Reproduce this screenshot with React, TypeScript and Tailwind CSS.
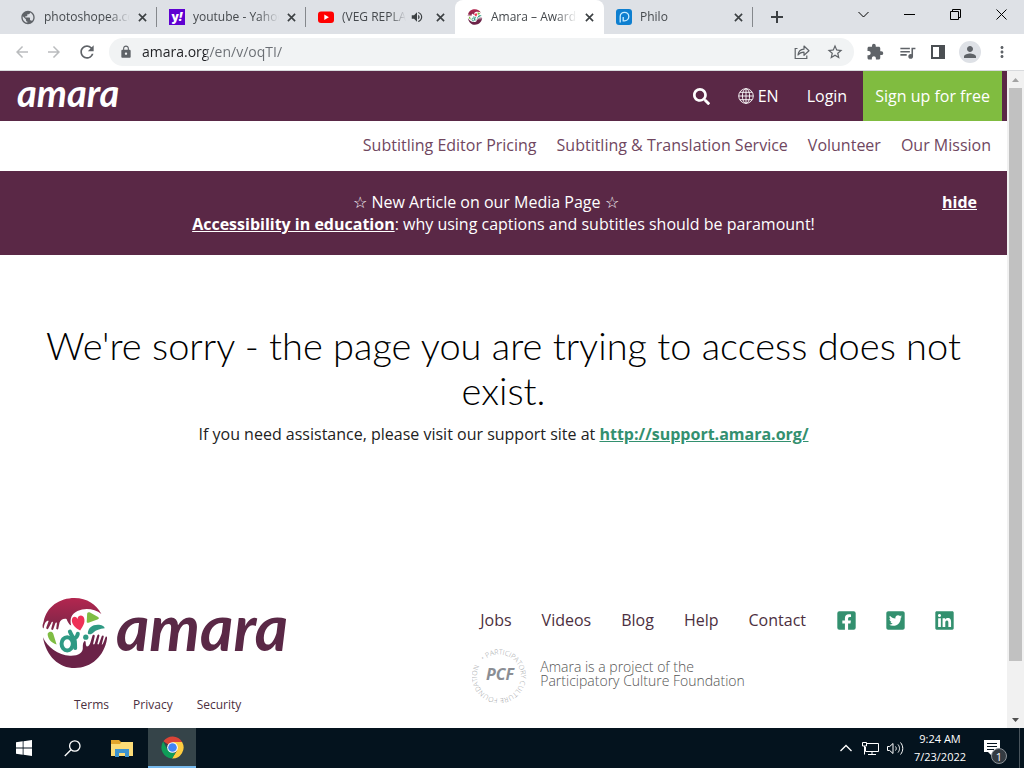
import type { ReactNode } from 'react';
import { FaFacebookSquare, FaLinkedin, FaSearch, FaTwitterSquare } from 'react-icons/fa';
import {
  MdArrowBack,
  MdArrowForward,
  MdExtension,
  MdLock,
  MdMoreVert,
  MdPerson,
  MdPublic,
  MdQueueMusic,
  MdRefresh,
  MdStarBorder,
  MdVolumeUp,
} from 'react-icons/md';

type Tab = {
  title: string;
  icon: ReactNode;
  active?: boolean;
  audio?: boolean;
  divider?: boolean;
};

const CloseIcon = () => (
  <svg viewBox="0 0 10 10" className="size-[9px]" stroke="#3c4043" strokeWidth="1.8">
    <path d="M1 1l8 8M9 1l-8 8" />
  </svg>
);

const Emblem = ({ className }: { className: string }) => (
  <svg viewBox="67 36 197 217" className={className} aria-hidden="true">
    <defs>
      <linearGradient id="topHand" x1="0" y1="0" x2="0" y2="1">
        <stop offset="0" stopColor="#b3264f" />
        <stop offset="1" stopColor="#7a2648" />
      </linearGradient>
    </defs>
    <path
      fill="url(#topHand)"
      d="M71 110C80 64 120 39 164 39c38 0 66 20 81 48-20-16-49-20-72-9-18 9-24 22-19 44-7-4-11-12-14-20-9-2-18 2-21 11l-4 19c-1 3-6 2-6-1l2-17c-2-2-4-1-5 2l-6 17c-2 4-7 2-6-2l5-19c-2-2-4-1-5 2l-9 17c-2 4-7 1-6-3l7-20c-7-1-12 6-15 22-2 2-4-3-3-10z"
    />
    <path
      fill="#6b2348"
      d="M69 157c13 30 46 54 81 56 24 1 41-7 39-27 0-7 1-14 6-18 5 3 1 12 6 17 6 0 9-6 11-12l6-20c2-5 7-3 7 1l-5 24c2 2 4 1 5-2l8-25c2-4 7-2 6 2l-6 25c2 2 4 1 5-2l8-22c2-4 7-2 6 2l-6 24c5-1 6-10 12-24 3-3 5 1 4 6-8 52-47 88-97 88-48 0-87-36-96-93z"
    />
    <path fill="#ee3157" d="M181 137c-14-8-26-19-25-32 1-11 13-13 17-3 2-13 17-13 20-2 4 13-4 25-12 37z" />
    <path fill="#7fbd43" d="M202 88c0-6 4-8 9-5l24 13c4 3 3 6-2 8l-25 9c-5 2-8 0-7-5zM83 147c5-8 13-8 17 0l10 32c-16-4-27-17-27-32z" />
    <path fill="#2f9a84" d="M204 145c2-16 13-25 30-25 12 0 20 5 21 10-15 2-26 5-34 13-5 6-14 8-17 2z" />
    <circle cx="198" cy="157" r="8" fill="#2f9a84" />
    <g fill="none" stroke="#2f9a84" strokeWidth="12" strokeLinecap="round">
      <ellipse cx="142" cy="177" rx="17" ry="20" />
      <path d="M150 140c3 8 8 16 13 22 4 8 2 18 3 28M163 162c6-3 10-8 11-15" />
    </g>
  </svg>
);

const GlobeIcon = () => (
  <svg viewBox="0 0 16 16" className="size-4" fill="none" stroke="currentColor" strokeWidth="0.9">
    <circle cx="8" cy="8" r="7.3" />
    <ellipse cx="8" cy="8" rx="3.6" ry="7.3" />
    <path d="M8 .7v14.6M.7 8h14.6M2 4.3h12M2 11.7h12" />
  </svg>
);

const PcfSeal = () => (
  <svg viewBox="0 0 58 58" className="size-[58px] shrink-0" fill="#9b9da2">
    <defs>
      <path id="sealRing" d="M11.4 15.8A22 22 0 1 1 11.3 15.9" />
    </defs>
    <text className="font-['Open_Sans'] text-[7px]">
      <textPath href="#sealRing">• PARTICIPATORY CULTURE FOUNDATION</textPath>
    </text>
    <text x="28" y="35" textAnchor="middle" fill="#8b8e94" className="font-['Open_Sans'] text-[16px] font-bold italic">
      PCF
    </text>
  </svg>
);

const ShareIcon = () => (
  <svg viewBox="0 0 16 16" className="size-4" fill="none" stroke="#5f6368" strokeWidth="1.2">
    <path d="M3.5 4.5H1.2v10h11.6v-3" />
    <path d="M4 11c.4-3.8 2.5-5.6 6-5.8V2l5 4.7-5 4.6V8.2C7.4 8.2 5.5 9 4 11z" strokeLinejoin="round" />
  </svg>
);

const ChromeIcon = () => (
  <svg viewBox="0 0 24 24" className="size-[23px]">
    <path fill="#db4437" d="M12 12L2.5 5.5A11.5 11.5 0 0 1 22 6.3H12z" />
    <path fill="#ffcd40" d="M12 6.3h10A11.5 11.5 0 0 1 11.5 23.5l5.4-8.7z" />
    <path fill="#0f9d58" d="M2.3 5.8l4.8 9L12 17.5h3.2l-3.7 6A11.5 11.5 0 0 1 2.3 5.8z" />
    <circle cx="12" cy="12" r="5.6" fill="#fff" />
    <circle cx="12" cy="12" r="4.5" fill="#4285f4" />
  </svg>
);

const tabs: Tab[] = [
  { title: 'photoshopea.com', icon: <MdPublic className="size-[17px] text-[#5f6368]" />, divider: true },
  {
    title: 'youtube - Yahoo',
    icon: (
      <span className="flex size-4 items-center justify-center bg-[#5f01d1] text-[12px] leading-none font-extrabold text-white">
        y<i>!</i>
      </span>
    ),
    divider: true,
  },
  {
    title: '(VEG REPLACE',
    icon: (
      <svg viewBox="0 0 16 16" className="size-4">
        <rect y="2.5" width="16" height="11.5" rx="3" fill="#f00" />
        <path d="M6.3 5.6v5.3l4.6-2.65z" fill="#fff" />
      </svg>
    ),
    audio: true,
  },
  { title: 'Amara – Award-w', icon: <Emblem className="size-4" />, active: true },
  {
    title: 'Philo',
    icon: (
      <svg viewBox="0 0 16 16" className="size-4" fill="none">
        <rect width="16" height="16" rx="3" fill="#0e7fd0" />
        <path d="M4.2 13.5V7.6a4.3 4.3 0 1 1 4.3 4.3H7.2V8" stroke="#c8ecff" strokeWidth="1.3" />
      </svg>
    ),
    divider: true,
  },
];

const navLinks = ['Subtitling Editor Pricing', 'Subtitling & Translation Service', 'Volunteer', 'Our Mission'];
const footerLinks = ['Jobs', 'Videos', 'Blog', 'Help', 'Contact'];
const legalLinks = ['Terms', 'Privacy', 'Security'];

const TabStrip = () => (
  <div className="flex h-[34px] shrink-0 bg-[#dee1e6] pl-2 text-xs text-[#45494d]">
    {tabs.map((tab) => (
      <div
        key={tab.title}
        className={`relative flex w-[149px] items-center pr-[10px] pl-3 ${
          tab.active ? 'rounded-t-lg bg-white' : ''
        }`}
      >
        <span className="flex size-4 shrink-0 items-center justify-center">{tab.icon}</span>
        <span className="ml-2 min-w-0 flex-1 overflow-hidden [mask-image:linear-gradient(to_right,#000_75%,transparent)] whitespace-nowrap">
          {tab.title}
        </span>
        {tab.audio && <MdVolumeUp className="mx-1 size-[14px] shrink-0 text-[#3c4043]" />}
        <button type="button" aria-label={`Close ${tab.title}`} className="ml-2 shrink-0">
          <CloseIcon />
        </button>
        {tab.divider && <span className="absolute right-0 h-5 w-px bg-[#85888c]" />}
      </div>
    ))}
    <button type="button" aria-label="New tab" className="flex w-12 items-center justify-center">
      <svg viewBox="0 0 12 12" className="size-3" stroke="#3c4043" strokeWidth="2">
        <path d="M6 0v12M0 6h12" />
      </svg>
    </button>
    <div className="ml-auto flex h-7 text-black [&_button]:flex [&_button]:w-[46px] [&_button]:items-center [&_button]:justify-center [&_svg]:size-[11px] [&_svg]:fill-none [&_svg]:stroke-current">
      <button type="button" aria-label="Search tabs">
        <svg viewBox="0 0 11 11"><path d="M.5 3l5 5 5-5" /></svg>
      </button>
      <button type="button" aria-label="Minimize">
        <svg viewBox="0 0 11 11"><path d="M0 5.5h11" /></svg>
      </button>
      <button type="button" aria-label="Restore">
        <svg viewBox="0 0 11 11"><path d="M.5 2.5h8v8h-8zM2.5 2.5v-2h8v8h-2" /></svg>
      </button>
      <button type="button" aria-label="Close">
        <svg viewBox="0 0 11 11"><path d="M.5.5l10 10M10.5.5l-10 10" /></svg>
      </button>
    </div>
  </div>
);

const Toolbar = () => (
  <div className="flex h-[37px] shrink-0 items-center border-b border-[#d8dadd] bg-white pr-[15px] pl-[13px] text-[#5f6368]">
    <button type="button" aria-label="Back" className="w-8 text-[#babcbe]"><MdArrowBack className="size-[18px]" /></button>
    <button type="button" aria-label="Forward" className="w-8 text-[#babcbe]"><MdArrowForward className="size-[18px]" /></button>
    <button type="button" aria-label="Reload" className="w-8"><MdRefresh className="size-5" /></button>
    <div className="flex h-7 flex-1 items-center rounded-full bg-[#f1f3f4] pr-[10px] pl-[10px]">
      <MdLock className="size-[14px]" />
      <input
        aria-label="Address"
        readOnly
        value="amara.org/en/v/oqTI/"
        className="ml-[9px] min-w-0 flex-1 bg-[linear-gradient(to_right,#202124_64px,#6a6e73_64px)] bg-clip-text text-sm text-transparent outline-none"
      />
      <button type="button" aria-label="Share" className="mr-4"><ShareIcon /></button>
      <button type="button" aria-label="Bookmark"><MdStarBorder className="size-[18px]" /></button>
    </div>
    <div className="ml-3 flex items-center gap-[14px]">
      <button type="button" aria-label="Extensions"><MdExtension className="size-[18px]" /></button>
      <button type="button" aria-label="Media"><MdQueueMusic className="size-[19px]" /></button>
      <button type="button" aria-label="Side panel" className="h-[14px] w-[14px] border-2 border-r-[6px] border-[#4b4f53]" />
      <button type="button" aria-label="Profile" className="flex size-[22px] items-center justify-center rounded-full bg-[#dee1e6]">
        <MdPerson className="size-[18px]" />
      </button>
      <button type="button" aria-label="Menu" className="-mx-0.5"><MdMoreVert className="size-[18px]" /></button>
    </div>
  </div>
);

const SiteHeader = () => (
  <header>
    <div className="flex h-[50px] items-center bg-[#5a2846] pr-[5px] pl-[17px] text-white">
      <a href="#home" className="pb-2 font-[Lato] text-[38px] leading-[42px] font-bold italic">amara</a>
      <button type="button" aria-label="Search" className="ml-auto"><FaSearch className="size-[17px]" /></button>
      <button type="button" className="ml-7 flex items-center gap-1"><GlobeIcon />EN</button>
      <a href="#login" className="ml-7">Login</a>
      <a href="#signup" className="ml-4 flex h-full items-center bg-[#80bc40] px-3">Sign up for free</a>
    </div>
    <nav className="flex h-[50px] items-center justify-end gap-5 pr-4 pb-0.5 text-[#70475f]">
      {navLinks.map((link) => <a key={link} href="#nav">{link}</a>)}
    </nav>
    <div className="bg-[#5a2846] px-[30px] py-5 text-center leading-[22px] text-white">
      <button type="button" className="float-right font-bold underline">hide</button>
      <p>☆ New Article on our Media Page ☆</p>
      <p><a href="#article" className="font-bold underline">Accessibility in education</a>: why using captions and subtitles should be paramount!</p>
    </div>
  </header>
);

const SiteFooter = () => (
  <footer className="flex pt-[152px] pr-[52px] pl-[42px] text-[#4c2f40]">
    <div>
      <a href="#home" className="flex items-center gap-2">
        <Emblem className="h-[72px] w-[66px]" />
        <span className="pb-3 font-[Lato] text-[64px] leading-[60px] font-bold text-[#5a2846] italic">amara</span>
      </a>
      <div className="mt-[26px] flex gap-6 pl-8 text-[12px] leading-[20px]">
        {legalLinks.map((link) => <a key={link} href="#legal">{link}</a>)}
      </div>
    </div>
    <div className="ml-auto pt-3">
      <div className="flex items-center gap-[30px] pl-2 leading-[22px]">
        {footerLinks.map((link) => <a key={link} href="#footer">{link}</a>)}
        <div className="flex gap-7 text-[21px] text-[#33906f]">
          <a href="#facebook" aria-label="Facebook"><FaFacebookSquare /></a>
          <a href="#twitter" aria-label="Twitter"><FaTwitterSquare /></a>
          <a href="#linkedin" aria-label="LinkedIn"><FaLinkedin /></a>
        </div>
      </div>
      <div className="mt-[14px] flex items-center gap-[10px] text-sm leading-[14px] font-light text-[#555]">
        <PcfSeal />
        <p>Amara is a project of the<br />Participatory Culture Foundation</p>
      </div>
    </div>
  </footer>
);

const Scrollbar = () => (
  <div className="flex w-[17px] shrink-0 flex-col items-center bg-[#f1f1f1]">
    <svg viewBox="0 0 17 17" className="size-[17px] shrink-0"><path d="M5 11l3.5-4 3.5 4z" fill="#a3a3a3" /></svg>
    <div className="w-[13px] flex-[573] bg-[#c1c1c1]" />
    <div className="flex-[50]" />
    <svg viewBox="0 0 17 17" className="size-[17px] shrink-0"><path d="M5 7l3.5 4L12 7z" fill="#505050" /></svg>
  </div>
);

const Taskbar = () => (
  <div className="flex h-10 shrink-0 items-stretch bg-[#04131e] text-white [&>button]:flex [&>button]:items-center [&>button]:justify-center">
    <button type="button" aria-label="Start" className="w-12">
      <svg viewBox="0 0 16 16" className="size-4" fill="#fff"><path d="M0 2.3l6.7-1v6.3H0zM7.5 1.2L16 0v7.6H7.5zM0 8.4h6.7v6.3l-6.7-1zM7.5 8.4H16V16l-8.5-1.2z" /></svg>
    </button>
    <button type="button" aria-label="Search" className="w-12">
      <svg viewBox="0 0 17 17" className="size-[17px]" fill="none" stroke="#fff" strokeWidth="1.3"><circle cx="10.8" cy="6" r="5.2" /><path d="M7 9.8L.8 16" /></svg>
    </button>
    <button type="button" aria-label="File Explorer" className="w-[52px]">
      <svg viewBox="0 0 22 18" className="h-[18px] w-[22px]">
        <path fill="#e3a62c" d="M0 1h8l2 2h12v5H0z" />
        <path fill="#fcdc77" d="M0 5h9l1.5-2H22v14H0z" />
        <path fill="#3d93cf" d="M4 10h14v8h-4v-4H8v4H4z" />
      </svg>
    </button>
    <button type="button" aria-label="Chrome" className="w-12 border-b-2 border-[#76b9ed] bg-[#354449]"><ChromeIcon /></button>
    <div className="ml-auto flex items-center">
      <svg viewBox="0 0 12 8" className="mr-[10px] h-2 w-3" fill="none" stroke="#fff" strokeWidth="1.3"><path d="M.5 7L6 1.5 11.5 7" /></svg>
      <svg viewBox="0 0 17 15" className="mr-2 h-[15px] w-[17px]" fill="none" stroke="#fff"><path d="M5 2.5h11.5v8H3.5V6M10 10.5v3M6 13.5h8M.5 1.5h4V5h-4zM2.5 5v8.5" /></svg>
      <svg viewBox="0 0 17 15" className="h-[15px] w-[17px]" fill="none" stroke="#fff"><path d="M.5 5.5h2.2l3.3-3v10l-3.3-3H.5zM8.5 5.5c1 1.3 1 2.7 0 4M11 3.5c2 2.5 2 5.5 0 8M13.5 1.5c3 3.5 3 8.5 0 12" /></svg>
    </div>
    <div className="ml-2 flex w-[56px] flex-col justify-center text-center text-[11px] leading-[18px] whitespace-nowrap">
      <span>9:24 AM</span>
      <span>7/23/2022</span>
    </div>
    <button type="button" aria-label="Notifications" className="relative ml-3 w-10 border-r border-[#49545c]">
      <svg viewBox="0 0 16 16" className="mr-4 size-4"><path fill="#fff" d="M0 0h16v12H8v4l-4-4H0z" /><path stroke="#04131e" d="M3 3.5h10M3 6.5h10M3 9.5h7" /></svg>
      <span className="absolute right-3 bottom-1 flex size-4 items-center justify-center rounded-full border border-[#8b9298] bg-[#343b42] text-[11px] leading-none">1</span>
    </button>
    <div className="w-1" />
  </div>
);

export default function App() {
  return (
    <div className="flex h-screen flex-col overflow-hidden bg-white font-['Open_Sans',sans-serif]">
      <TabStrip />
      <Toolbar />
      <div className="flex min-h-0 flex-1">
        <div className="min-w-0 flex-1 overflow-hidden">
          <SiteHeader />
          <main className="px-8 pt-[68px] text-center text-[#222]">
            <h1 className="font-[Lato] text-[38px] leading-[45px] font-light text-black">
              We're sorry - the page you are trying to access does not exist.
            </h1>
            <p className="mt-[10px] leading-[22px]">
              If you need assistance, please visit our support site at{' '}
              <a href="#support" className="font-bold text-[#33906f] underline">http://support.amara.org/</a>
            </p>
          </main>
          <SiteFooter />
        </div>
        <Scrollbar />
      </div>
      <Taskbar />
    </div>
  );
}
